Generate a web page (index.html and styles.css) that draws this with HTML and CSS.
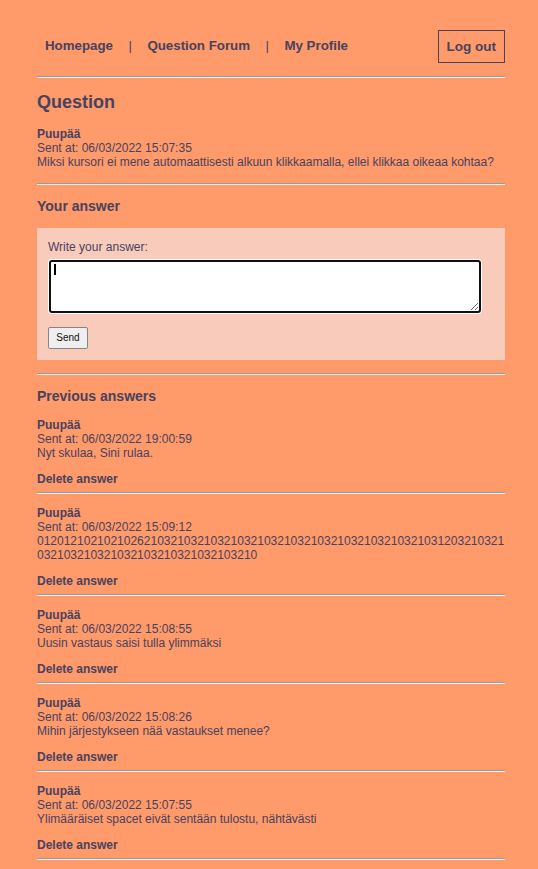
FILE: index.html
```html
<!DOCTYPE html>
<html lang="en">
<head>
<meta charset="utf-8">
<title>Question</title>
<link rel="stylesheet" href="styles.css">
</head>
<body>
<div class="page">
  <nav class="nav">
    <div class="nav-links">
      <a class="nav-link" href="#">Homepage</a>
      <span class="sep">|</span>
      <a class="nav-link" href="#">Question Forum</a>
      <span class="sep">|</span>
      <a class="nav-link" href="#">My Profile</a>
    </div>
    <button class="logout">Log out</button>
  </nav>
  <hr class="rule rule-nav">

  <h2 class="title">Question</h2>
  <div class="post">
    <div class="author">Puupää</div>
    <div>Sent at: 06/03/2022 15:07:35</div>
    <div>Miksi kursori ei mene automaattisesti alkuun klikkaamalla, ellei klikkaa oikeaa kohtaa?</div>
  </div>
  <hr class="rule rule-q">

  <h3 class="subtitle">Your answer</h3>
  <form class="answer-form">
    <label class="label" for="ans">Write your answer:</label>
    <div class="ta-wrap">
      <textarea id="ans" class="ta"></textarea>
      <span class="caret"></span>
    </div>
    <button type="button" class="send">Send</button>
  </form>
  <hr class="rule rule-form">

  <h3 class="subtitle prev">Previous answers</h3>

  <div class="answer">
    <div class="author">Puupää</div>
    <div>Sent at: 06/03/2022 19:00:59</div>
    <div>Nyt skulaa, Sini rulaa.</div>
    <a class="delete" href="#">Delete answer</a>
  </div>
  <hr class="rule">

  <div class="answer">
    <div class="author">Puupää</div>
    <div>Sent at: 06/03/2022 15:09:12</div>
    <div class="breakall">0120121021021026210321032103210321032103210321032103210321031203210321032103210321032103210321032103210</div>
    <a class="delete" href="#">Delete answer</a>
  </div>
  <hr class="rule">

  <div class="answer">
    <div class="author">Puupää</div>
    <div>Sent at: 06/03/2022 15:08:55</div>
    <div>Uusin vastaus saisi tulla ylimmäksi</div>
    <a class="delete" href="#">Delete answer</a>
  </div>
  <hr class="rule">

  <div class="answer">
    <div class="author">Puupää</div>
    <div>Sent at: 06/03/2022 15:08:26</div>
    <div>Mihin järjestykseen nää vastaukset menee?</div>
    <a class="delete" href="#">Delete answer</a>
  </div>
  <hr class="rule">

  <div class="answer">
    <div class="author">Puupää</div>
    <div>Sent at: 06/03/2022 15:07:55</div>
    <div>Ylimääräiset spacet eivät sentään tulostu, nähtävästi</div>
    <a class="delete" href="#">Delete answer</a>
  </div>
  <hr class="rule">
</div>
</body>
</html>
```

FILE: styles.css
```css
html, body {
  margin: 0;
  padding: 0;
  background: #ff9a6a;
}
body {
  font-family: "Liberation Sans", Arial, sans-serif;
  font-size: 12px;
  line-height: 14px;
  color: #47425f;
}
.page {
  padding: 0 33px 20px 37px;
}
.nav {
  display: flex;
  align-items: center;
  justify-content: space-between;
  padding-top: 30px;
}
.nav-links {
  display: flex;
  align-items: center;
  gap: 15.5px;
  padding-left: 8px;
  padding-bottom: 2px;
}
.nav-link {
  font-size: 13.3px;
  font-weight: bold;
  color: #47425f;
  text-decoration: none;
  line-height: 15px;
}
.sep {
  font-size: 13px;
  line-height: 15px;
  color: #47425f;
}
.logout {
  font-family: "Liberation Sans", Arial, sans-serif;
  font-size: 13.5px;
  font-weight: bold;
  color: #47425f;
  background: transparent;
  border: 1px solid #47425f;
  padding: 8px 8px;
  line-height: 15px;
  height: 33px;
  margin: 0;
}
.rule {
  border: 0;
  border-top: 1px solid #9a9a9a;
  border-bottom: 1px solid #eeeeee;
  height: 0;
  margin: 6px 0 0;
}
.rule-nav { margin-top: 13px; }
.rule-q { margin-top: 14px; }
.rule-form { margin-top: 13px; }
.title {
  font-size: 18px;
  line-height: 21px;
  font-weight: bold;
  margin: 14px 0 14px;
}
.author {
  font-weight: bold;
}
.subtitle {
  font-size: 14px;
  line-height: 16px;
  font-weight: bold;
  margin: 13px 0 14px;
}
.subtitle.prev {
  margin-bottom: 2px;
}
.answer-form {
  background: #f9cbbb;
  padding: 12px 11px 11px;
  display: flex;
  flex-direction: column;
  align-items: flex-start;
}
.label {
  margin-bottom: 6px;
}
.ta-wrap {
  position: relative;
  margin-left: 1px;
  margin-bottom: 14px;
}
.ta {
  display: block;
  box-sizing: border-box;
  width: 432px;
  height: 53px;
  border: 2px solid #101010;
  border-radius: 3px;
  box-shadow: 0 0 0 1px #ffffff;
  background: #ffffff;
  margin: 0;
  padding: 2px;
  outline: none;
}
.caret {
  position: absolute;
  left: 5px;
  top: 4px;
  width: 2px;
  height: 11px;
  background: #000;
}
.send {
  font-family: "Liberation Sans", Arial, sans-serif;
  font-size: 10px;
  line-height: 12px;
  color: #111;
  background: #efefef;
  border: 1px solid #858585;
  border-radius: 2px;
  padding: 4px 7px;
  width: 40px;
  height: 22px;
  margin: 0;
}
.answer {
  padding-top: 12px;
}
.breakall {
  word-break: break-all;
}
.delete {
  display: block;
  margin-top: 12px;
  font-weight: bold;
  color: #47425f;
  text-decoration: none;
}
```
